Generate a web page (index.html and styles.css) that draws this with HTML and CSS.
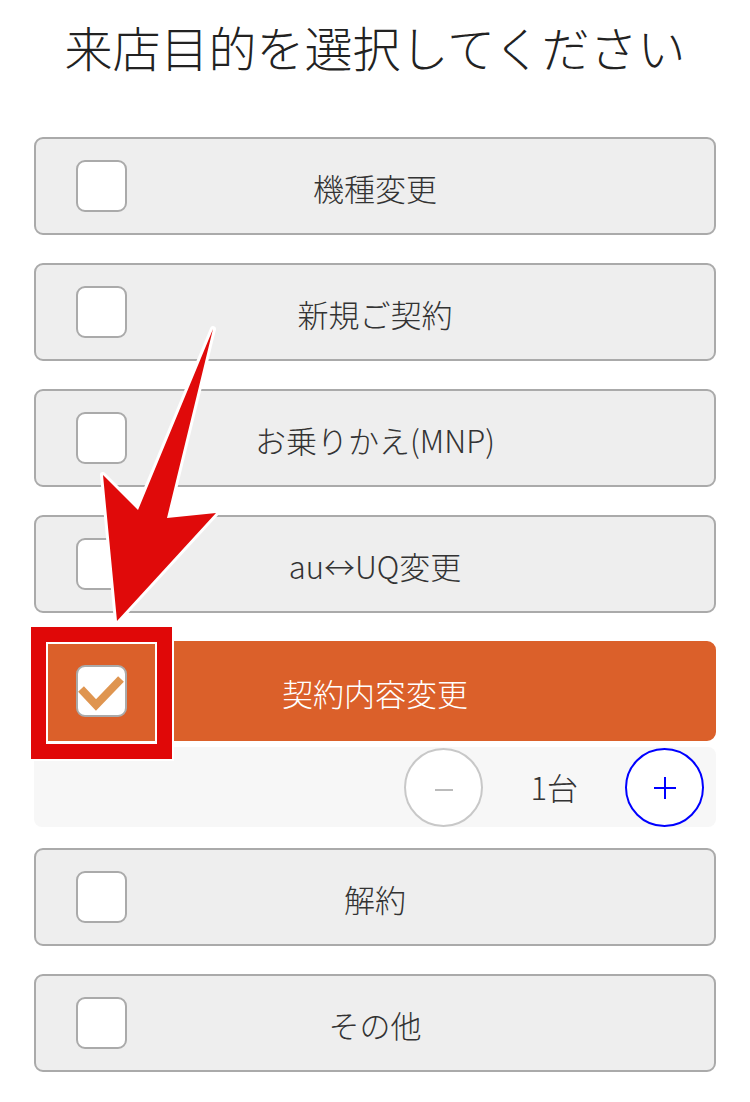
FILE: index.html
```html
<!DOCTYPE html>
<html lang="ja">
<head>
<meta charset="utf-8">
<title>来店目的を選択してください</title>
<link rel="stylesheet" href="styles.css">
</head>
<body>
<div class="page">
  <h1 class="title">来店目的を選択してください</h1>
  <ul class="options">
    <li class="option"><span class="check"></span><span class="label">機種変更</span></li>
    <li class="option"><span class="check"></span><span class="label">新規ご契約</span></li>
    <li class="option"><span class="check"></span><span class="label">お乗りかえ(MNP)</span></li>
    <li class="option"><span class="check"></span><span class="label">au↔UQ変更</span></li>
    <li class="group">
      <div class="option option--selected">
        <span class="check">
          <svg class="tick" width="51" height="52" viewBox="0 0 51 52"><polyline points="5,24 20,40 45,14" fill="none" stroke="#df9550" stroke-width="8"/></svg>
        </span>
        <span class="label">契約内容変更</span>
      </div>
      <div class="counter">
        <span class="step step--minus"><span class="bar"></span></span>
        <span class="count">1台</span>
        <span class="step step--plus"><span class="bar"></span><span class="bar bar--v"></span></span>
      </div>
      <div class="highlight"></div>
    </li>
    <li class="option"><span class="check"></span><span class="label">解約</span></li>
    <li class="option"><span class="check"></span><span class="label">その他</span></li>
  </ul>
  <svg class="arrow" width="750" height="1102" viewBox="0 0 750 1102">
    <polygon points="213,329 167,518 216,513 117,621 103,475 138,510" fill="#e00a0a" stroke="#ffffff" stroke-width="6" stroke-linejoin="round" paint-order="stroke"/>
  </svg>
</div>
</body>
</html>
```
FILE: styles.css
```css
html, body {
  margin: 0;
  padding: 0;
  background: #ffffff;
}
.page {
  position: relative;
  width: 750px;
  height: 1102px;
  overflow: hidden;
  font-family: "Noto Sans CJK JP", "Noto Sans", sans-serif;
  font-weight: 300;
  color: #333333;
}
.title {
  margin: 0;
  padding-top: 13px;
  font-size: 48px;
  line-height: 67px;
  font-weight: 300;
  text-align: center;
  color: #222222;
}
.options {
  list-style: none;
  margin: 57px 34px 0;
  padding: 0;
}
.option {
  display: grid;
  grid-template-columns: 51px 1fr 51px;
  align-items: center;
  box-sizing: border-box;
  height: 98px;
  padding: 0 40px;
  border: 2px solid #aaaaaa;
  border-radius: 9px;
  background: #eeeeee;
  margin-bottom: 28px;
}
.check {
  position: relative;
  display: block;
  box-sizing: border-box;
  width: 51px;
  height: 52px;
  border: 2px solid #aaaaaa;
  border-radius: 9px;
  background: #ffffff;
}
.tick {
  position: absolute;
  left: -2px;
  top: -2px;
  overflow: visible;
}
.label {
  text-align: center;
  font-size: 31px;
  line-height: 40px;
  padding-top: 4px;
}
.group {
  position: relative;
  margin-bottom: 21px;
}
.option--selected {
  height: 100px;
  margin-bottom: 0;
  background: #db602a;
  border-color: #db602a;
}
.option--selected .label {
  color: #ffffff;
}
.counter {
  display: flex;
  justify-content: flex-end;
  align-items: center;
  gap: 47px;
  height: 80px;
  margin-top: 6px;
  padding-right: 12px;
  background: #f7f7f7;
  border-radius: 8px;
}
.count {
  font-size: 31px;
  line-height: 40px;
  color: #333333;
}
.step {
  position: relative;
  display: block;
  box-sizing: border-box;
  width: 79px;
  height: 79px;
  border-radius: 50%;
  background: #ffffff;
  border: 2px solid #c8c8c8;
}
.step--plus {
  border-color: #0000ff;
}
.bar {
  position: absolute;
  left: 50%;
  top: 50%;
  width: 18px;
  height: 2px;
  margin: 2px 0 0 -9px;
  background: #bbbbbb;
}
.step--plus .bar {
  width: 22px;
  margin: 0 0 0 -11px;
  background: #0000ff;
}
.step--plus .bar--v {
  width: 2px;
  height: 22px;
  margin: -10px 0 0 -1px;
}
.highlight {
  position: absolute;
  left: -3px;
  top: -14px;
  width: 141px;
  height: 132px;
  box-sizing: border-box;
  border: 15px solid #e00808;
  box-shadow: inset 0 0 0 2px #ffffff, 0 0 0 2px #ffffff;
}
.arrow {
  position: absolute;
  left: 0;
  top: 0;
  pointer-events: none;
}
```
